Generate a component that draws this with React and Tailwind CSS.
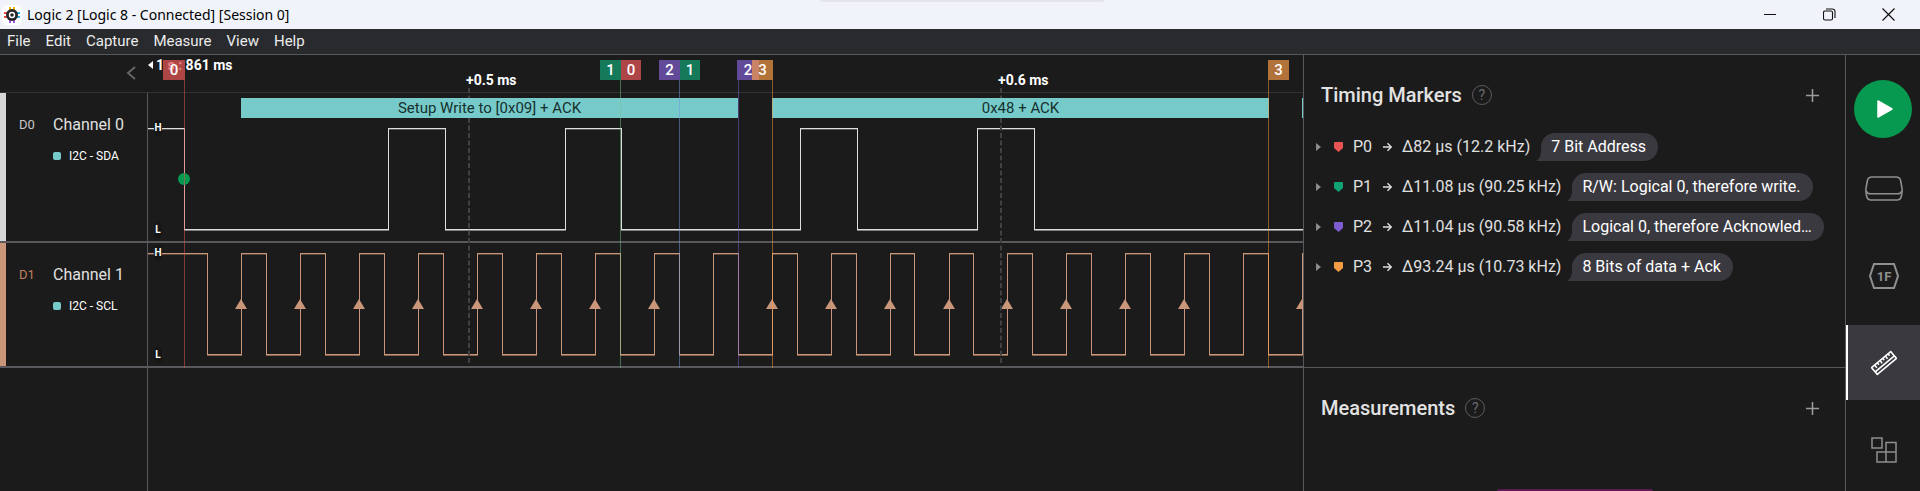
import React from "react";

// All horizontal positions below are pixels from the left edge of the trace area.
const CH0_EDGES = [36, 240, 297, 417, 473, 652, 709, 829, 886];
const CH1_EDGES = [
  59, 93, 118, 152, 177, 211, 236, 270, 295, 329, 354, 388, 413, 447, 472, 506, 531, 565, 590,
  624, 649, 683, 708, 742, 766, 801, 825, 859, 884, 918, 943, 977, 1002, 1036, 1061, 1095, 1120, 1154,
];
const CLOCK_ARROWS = [93, 152, 211, 270, 329, 388, 447, 506, 624, 683, 742, 801, 859, 918, 977, 1036, 1154];
const TRACE_END = 4000;

const FRAMES = [
  { x: 93, width: 497, text: "Setup Write to [0x09] + ACK" },
  { x: 624, width: 497, text: "0x48 + ACK" },
  { x: 1154, width: 497, text: "" },
];

const MARKER_LINES = [
  { x: 36, color: "#e85454" },
  { x: 472, color: "#78c08c" },
  { x: 531, color: "#789ae0" },
  { x: 590, color: "#7f5bd0" },
  { x: 624, color: "#f39a45" },
  { x: 1120, color: "#f39a45" },
];

const FLAGS = [
  { x: 15, width: 22, label: "0", tone: "bg-[#e05555]/75" },
  { x: 452, width: 21, label: "1", tone: "bg-[#147a5a]" },
  { x: 473, width: 20, label: "0", tone: "bg-[#ae4547]" },
  { x: 511, width: 21, label: "2", tone: "bg-[#634a99]" },
  { x: 532, width: 20, label: "1", tone: "bg-[#147a5a]" },
  { x: 589, width: 22, label: "2", tone: "bg-[#634a99]" },
  { x: 604, width: 21, label: "3", tone: "bg-linear-to-r from-[#ca8364] from-[7px] to-[#b2733a] to-[7px]" },
  { x: 1120, width: 21, label: "3", tone: "bg-[#b2733a]" },
];

const TIMING = [
  { name: "P0", color: "#e85454", value: "Δ82 µs (12.2 kHz)", note: "7 Bit Address" },
  { name: "P1", color: "#12a172", value: "Δ11.08 µs (90.25 kHz)", note: "R/W: Logical 0, therefore write." },
  { name: "P2", color: "#7f5bd0", value: "Δ11.04 µs (90.58 kHz)", note: "Logical 0, therefore Acknowled…" },
  { name: "P3", color: "#f39a45", value: "Δ93.24 µs (10.73 kHz)", note: "8 Bits of data + Ack" },
];

function Trace({ edges, high, low, color, dim, arrows = [], arrowY = 0, height }) {
  const points = [0, ...edges, TRACE_END];
  return (
    <svg className="block w-full" height={height} aria-hidden="true">
      {points.slice(0, -1).map((x, i) => {
        const y = i % 2 === 0 ? high : low;
        const w = points[i + 1] - x + 1;
        return (
          <g key={x}>
            <rect x={x} y={y + 1} width={w} height="1" fill={dim} opacity={i % 2 === 0 ? 0.6 : 1} />
            <rect x={x} y={y} width={w} height="1" fill={color} />
          </g>
        );
      })}
      {edges.map((x) => (
        <rect key={x} x={x} y={high} width="1" height={low - high + 1} fill={color} />
      ))}
      {arrows.map((x) => (
        <path key={x} d={`M${x} ${arrowY} l6 10 h-12 z`} fill={color} />
      ))}
    </svg>
  );
}

function Level({ top, children }) {
  return (
    <span
      className="absolute left-[6px] flex h-4 w-2 items-center justify-center rounded-sm bg-[#161616] text-[10px] font-bold leading-4 text-white"
      style={{ top }}
    >
      {children}
    </span>
  );
}

function Channel({ id, name, signal, strip, idColor, rowHeight, children }) {
  return (
    <div className="flex border-b-2 border-[#58585d]">
      <div className={`flex w-[147px] shrink-0 ${rowHeight}`}>
        <div className={`w-[6px] ${strip}`} />
        <div className="flex flex-col gap-[11px] pl-[13px] pt-[22px]">
          <div className="flex items-center">
            <span className={`w-[34px] text-[13px] leading-5 ${idColor}`}>{id}</span>
            <span className="text-base leading-5 text-[#e0e0e0]">{name}</span>
          </div>
          <div className="flex items-center gap-2 pl-[34px]">
            <span className="size-2 rounded-[2px] bg-[#76cbca]" />
            <span className="text-xs leading-5 text-white">{signal}</span>
          </div>
        </div>
      </div>
      <div className="relative min-w-0 flex-1 overflow-hidden border-l border-[#58585d]">{children}</div>
    </div>
  );
}

function PanelHeader({ title }) {
  return (
    <div className="flex items-center gap-[10px]">
      <h2 className="text-xl font-medium leading-6 text-[#e2e2e2]">{title}</h2>
      <button
        aria-label={`${title} help`}
        className="flex size-5 items-center justify-center rounded-full border border-[#5b5b60] text-sm text-[#6a6a6f]"
      >
        ?
      </button>
      <button aria-label={`Add to ${title}`} className="ml-auto text-[#9a9a9a]">
        <svg width="13" height="13" viewBox="0 0 13 13" fill="none" stroke="currentColor" strokeWidth="1.6">
          <path d="M6.5 0v13M0 6.5h13" />
        </svg>
      </button>
    </div>
  );
}

function Graph() {
  return (
    <section className="relative flex min-w-0 flex-1 flex-col overflow-hidden">
      <div className="flex h-[38px] border-b border-[#333336]">
        <button aria-label="Collapse channels" className="ml-[126px] h-9 text-[#66666a]">
          <svg width="10" height="14" viewBox="0 0 10 14" fill="none" stroke="currentColor" strokeWidth="2">
            <path d="M9 1 2 7l7 6" />
          </svg>
        </button>
      </div>

      <Channel id="D0" name="Channel 0" signal="I2C - SDA" strip="bg-[#d6d6d6]" idColor="text-[#c8c8c8]" rowHeight="h-[148px]">
        <Trace edges={CH0_EDGES} high={35} low={136} color="#dedede" dim="#7d8080" height={148} />
        <Level top={27}>H</Level>
        <Level top={129}>L</Level>
      </Channel>

      <Channel id="D1" name="Channel 1" signal="I2C - SCL" strip="bg-[#c9967a]" idColor="text-[#c07f62]" rowHeight="h-[123px]">
        <Trace
          edges={CH1_EDGES}
          high={10}
          low={111}
          color="#c9967a"
          dim="#86634f"
          arrows={CLOCK_ARROWS}
          arrowY={56}
          height={123}
        />
        <Level top={2}>H</Level>
        <Level top={104}>L</Level>
      </Channel>

      <div className="ml-[147px] flex-1 border-l border-[#58585d]" />

      {/* Time scale, decoded frames and markers float over the traces */}
      <div className="absolute inset-y-0 left-[148px] right-0 overflow-hidden">
        <svg className="absolute left-0 top-0 w-full" height="313" aria-hidden="true">
          {[320, 852].map((x) => (
            <line key={x} x1={x + 1} x2={x + 1} y1="33" y2="310" stroke="#414144" strokeWidth="2" strokeDasharray="5 2.5" />
          ))}
        </svg>
        {FRAMES.map((f) => (
          <div
            key={f.x}
            className="absolute top-[43px] h-5 bg-[#76cbca] text-center text-[15px] leading-5 text-[#17302f]"
            style={{ left: f.x, width: f.width }}
          >
            {f.text}
          </div>
        ))}
        <div className="absolute left-0 top-0 flex h-5 items-center gap-[3px] text-sm font-bold text-white">
          <svg width="5" height="8" viewBox="0 0 5 8" fill="currentColor" aria-hidden="true">
            <path d="M5 0v8L0 4z" />
          </svg>
          1 s : 861 ms
        </div>
        {[
          [318, "+0.5 ms"],
          [850, "+0.6 ms"],
        ].map(([left, text]) => (
          <span key={text} className="absolute top-[15px] text-sm font-bold leading-5 text-white" style={{ left }}>
            {text}
          </span>
        ))}
        <svg className="absolute left-0 top-0 w-full" height="313" aria-hidden="true">
          <circle cx="36" cy="124" r="6" fill="#06994f" />
          {MARKER_LINES.map((m) => (
            <rect key={m.x} x={m.x} y="25" width="1" height="288" fill={m.color} opacity="0.5" />
          ))}
        </svg>
        {FLAGS.map((f) => (
          <div
            key={f.x}
            className={`absolute top-[5px] h-5 text-center text-[15px] font-medium leading-5 text-white ${f.tone}`}
            style={{ left: f.x, width: f.width }}
          >
            {f.label}
          </div>
        ))}
      </div>
    </section>
  );
}

function TimingRow({ name, color, value, note }) {
  return (
    <li className="flex h-7 items-center text-base text-[#e0e0e0]">
      <button aria-label={`Expand ${name}`} className="w-[18px] shrink-0 text-[#8c8c8c]">
        <svg width="5" height="8" viewBox="0 0 5 8" fill="currentColor">
          <path d="M0 0v8l5-4z" />
        </svg>
      </button>
      <svg className="shrink-0" width="9" height="10" viewBox="0 0 9 10" fill={color} aria-hidden="true">
        <path d="M1 0h7a1 1 0 0 1 1 1v5L4.500 10 0 6V1a1 1 0 0 1 1-1z" />
      </svg>
      <span className="w-10 shrink-0 pl-[10px]">{name}</span>
      <svg className="mr-[10px] shrink-0" width="9" height="10" viewBox="0 0 9 10" fill="none" stroke="currentColor" strokeWidth="1.4" aria-hidden="true">
        <path d="M0 5h8M4.500 1.200 8.300 5 4.500 8.800" />
      </svg>
      <span className="whitespace-nowrap">{value}</span>
      <span className="ml-[6px] flex">
        <svg className="-mr-[2px] shrink-0" width="7" height="28" viewBox="0 0 7 28" fill="#3a393f" aria-hidden="true">
          <path d="M0 28C3 26 5 23 5 18h2v10z" />
        </svg>
        <span className="whitespace-nowrap rounded-r-full rounded-tl-full bg-[#3a393f] pl-[10px] pr-3 leading-7 text-white">
          {note}
        </span>
      </span>
    </li>
  );
}

function SidePanel() {
  return (
    <aside className="flex w-[543px] shrink-0 flex-col border-x border-[#58585d]">
      <section className="h-[313px] border-b border-[#58585d] pl-[17px] pr-[26px] pt-[28px]">
        <PanelHeader title="Timing Markers" />
        <ul className="-ml-[5px] -mr-[20px] mt-[26px] flex flex-col gap-3">
          {TIMING.map((t) => (
            <TimingRow key={t.name} {...t} />
          ))}
        </ul>
      </section>
      <section className="flex flex-1 flex-col pt-[28px]">
        <div className="pl-[17px] pr-[26px]">
          <PanelHeader title="Measurements" />
        </div>
        <div className="mt-auto h-[2px] w-[156px] self-center rounded-t bg-[#5e1a56]" />
      </section>
    </aside>
  );
}

function Tile({ label, active = false, children }) {
  return (
    <button
      aria-label={label}
      className={`flex h-[75px] w-full items-center justify-center border-l-2 ${
        active ? "border-white bg-[#3a393f] text-white" : "border-transparent text-[#8f8f8f]"
      }`}
    >
      {children}
    </button>
  );
}

function Toolbar() {
  return (
    <nav className="flex w-[74px] shrink-0 flex-col items-center pt-[25px]">
      <button aria-label="Start capture" className="mb-[13px] flex size-[58px] items-center justify-center rounded-full bg-[#06994f]">
        <svg className="ml-1" width="16" height="18" viewBox="0 0 16 18" fill="#fff" stroke="#fff" strokeWidth="1.500" strokeLinejoin="round">
          <path d="M1 1v16l14-8z" />
        </svg>
      </button>
      <div className="flex w-full flex-col gap-3">
        <Tile label="Device">
          <svg width="38" height="26" viewBox="0 0 38 26" fill="none" stroke="currentColor" strokeWidth="1.6">
            <path d="M7 1h24c2.500 0 4 1 4.600 3.500L37 12c.3 2.500.1 5-.6 8-.6 3-1.900 4-4.400 4H6c-2.500 0-3.800-1-4.400-4C.9 17 .7 14.500 1 12l1.400-7.500C3 2 4.500 1 7 1z" />
            <path d="M1.200 15c.6 2 2 2.800 4.300 2.800h27c2.300 0 3.700-.8 4.300-2.800" />
          </svg>
        </Tile>
        <Tile label="Analyzers">
          <svg width="30" height="26" viewBox="0 0 30 26" fill="none" stroke="currentColor" strokeWidth="2">
            <path d="M5 1h20l4 12-4 12H5L1 13z" />
            <text x="15" y="17.500" textAnchor="middle" fontFamily="Roboto, sans-serif" fontSize="13" fontWeight="700" fill="currentColor" stroke="none">
              1F
            </text>
          </svg>
        </Tile>
        <Tile label="Measurements" active>
          <svg width="26" height="26" viewBox="0 0 26 26" fill="none" stroke="currentColor" strokeWidth="1.600" strokeLinejoin="round">
            <g transform="rotate(-40 13 13)">
              <rect x="0.500" y="8.500" width="25" height="9" />
              <path d="M.5 14.200h25M4.500 8.500v3.500M8 8.500v2.500M11.500 8.500v3.500M15 8.500v2.500M18.500 8.500v3.500M22 8.500v2.500" />
            </g>
          </svg>
        </Tile>
        <Tile label="Extensions">
          <svg width="26" height="26" viewBox="0 0 26 26" fill="none" stroke="currentColor" strokeWidth="1.500">
            <path d="M1 1h10v10H1zM15 5.500h10V25H15zM6 15h19v10H6z" />
          </svg>
        </Tile>
      </div>
    </nav>
  );
}

function AppIcon() {
  return (
    <svg width="20" height="20" viewBox="0 0 20 20" aria-hidden="true">
      <rect width="20" height="20" rx="5" fill="#fff" />
      <path d="M8 2v4M12 2v4" stroke="#f2b705" strokeWidth="2" />
      <path d="M8 14v4M12 14v4" stroke="#a05be0" strokeWidth="2" />
      <path d="M2 8h4M2 12h4" stroke="#ee4b3e" strokeWidth="2" />
      <path d="M14 8h4M14 12h4" stroke="#2fa8e0" strokeWidth="2" />
      <circle cx="10" cy="10" r="6" fill="#26262a" />
      <circle cx="10" cy="10" r="2.500" fill="#26262a" stroke="#fff" strokeWidth="1.400" />
    </svg>
  );
}

export default function App() {
  return (
    <div className="flex min-h-screen flex-col bg-[#1b1b1b] font-['Roboto',sans-serif]">
      <header className="relative flex h-[29px] items-center bg-[#f0f3fa] pl-[2px] text-black">
        <div className="absolute left-[820px] top-0 h-[2px] w-[284px] rounded-b bg-[#e3e5ea]" />
        <AppIcon />
        <h1 className="ml-[5px] font-['Noto_Sans','Open_Sans',sans-serif] text-sm">
          Logic 2 [Logic 8 - Connected] [Session 0]
        </h1>
        <div className="ml-auto flex items-center gap-[46px] pr-[25px]">
          <button aria-label="Minimize">
            <svg width="13" height="13" viewBox="0 0 13 13" stroke="#111">
              <path d="M0 6.500h12" />
            </svg>
          </button>
          <button aria-label="Restore">
            <svg width="13" height="13" viewBox="0 0 13 13" fill="none" stroke="#111" strokeWidth="1.100">
              <rect x="0.500" y="3" width="9" height="9" rx="1.500" />
              <path d="M3 1h6.500a2.500 2.500 0 0 1 2.500 2.500V10" />
            </svg>
          </button>
          <button aria-label="Close">
            <svg width="13" height="13" viewBox="0 0 13 13" stroke="#111" strokeWidth="1.200">
              <path d="M.5.5l12 12M12.500.5l-12 12" />
            </svg>
          </button>
        </div>
      </header>
      <nav className="flex h-[26px] items-center gap-[15px] border-b border-[#58585d] bg-[#292a2d] pl-[7px] text-[15px] text-[#ececec]">
        {["File", "Edit", "Capture", "Measure", "View", "Help"].map((item) => (
          <button key={item}>{item}</button>
        ))}
      </nav>
      <main className="flex flex-1">
        <Graph />
        <SidePanel />
        <Toolbar />
      </main>
    </div>
  );
}
